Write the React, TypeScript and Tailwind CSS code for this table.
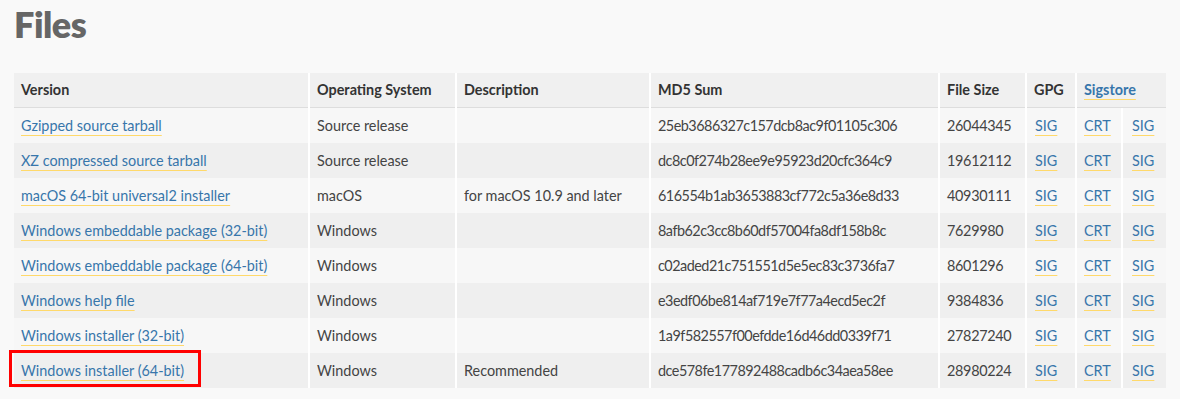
import React from "react";

type Row = {
  v: string;
  os: string;
  d: string;
  md5: string;
  size: string;
};

const rows: Row[] = [
  { v: "Gzipped source tarball", os: "Source release", d: "", md5: "25eb3686327c157dcb8ac9f01105c306", size: "26044345" },
  { v: "XZ compressed source tarball", os: "Source release", d: "", md5: "dc8c0f274b28ee9e95923d20cfc364c9", size: "19612112" },
  { v: "macOS 64-bit universal2 installer", os: "macOS", d: "for macOS 10.9 and later", md5: "616554b1ab3653883cf772c5a36e8d33", size: "40930111" },
  { v: "Windows embeddable package (32-bit)", os: "Windows", d: "", md5: "8afb62c3cc8b60df57004fa8df158b8c", size: "7629980" },
  { v: "Windows embeddable package (64-bit)", os: "Windows", d: "", md5: "c02aded21c751551d5e5ec83c3736fa7", size: "8601296" },
  { v: "Windows help file", os: "Windows", d: "", md5: "e3edf06be814af719e7f77a4ecd5ec2f", size: "9384836" },
  { v: "Windows installer (32-bit)", os: "Windows", d: "", md5: "1a9f582557f00efdde16d46dd0339f71", size: "27827240" },
  { v: "Windows installer (64-bit)", os: "Windows", d: "Recommended", md5: "dce578fe177892488cadb6c34aea58ee", size: "28980224" },
];

function A({ children }: { children: React.ReactNode }) {
  return (
    <a
      href="#"
      className="text-[#3776ab] underline decoration-[#ffd96a] decoration-1 underline-offset-[4px]"
    >
      {children}
    </a>
  );
}

export default function App() {
  const font = { fontFamily: "Lato, 'Noto Sans', sans-serif" };
  return (
    <div className="min-h-[399px] w-[1180px] bg-[#f9f9f9] px-[14px] pt-[4px]" style={font}>
      <h2 className="m-0 text-[36px] font-extrabold leading-[40px] tracking-[-0.5px] text-[#666]">Files</h2>
      <div className="mt-[29px] grid w-[1152px] grid-cols-[294px_145px_192px_287px_85px_48px_44px_43px] gap-x-[2px] bg-white text-[14.4px] text-[#444]">
        {["Version", "Operating System", "Description", "MD5 Sum", "File Size", "GPG"].map((h) => (
          <div
            key={h}
            className="flex h-[35px] items-center border-b border-[#ddd] bg-[#f0f0f0] pl-[7px] font-bold text-[#333]"
          >
            {h}
          </div>
        ))}
        <div className="col-span-2 flex h-[35px] items-center border-b border-[#ddd] bg-[#f0f0f0] pl-[7px] font-bold">
          <A>Sigstore</A>
        </div>
        {rows.map((r, i) => {
          const bg = i % 2 === 0 ? "bg-[#f7f7f7]" : "bg-[#efefef]";
          const cell = `flex h-[35px] items-center pl-[7px] ${bg}`;
          return (
            <React.Fragment key={r.v}>
              <div className={`${cell} relative`}>
                <A>{r.v}</A>
                {i === rows.length - 1 && (
                  <div className="pointer-events-none absolute left-[-5px] top-[-3px] h-[37px] w-[192px] border-[3px] border-[#f00]" />
                )}
              </div>
              <div className={cell}>{r.os}</div>
              <div className={cell}>{r.d}</div>
              <div className={`${cell} tracking-[-0.5px]`}>{r.md5}</div>
              <div className={`${cell} tracking-[-0.3px]`}>{r.size}</div>
              <div className={`${cell} pl-[8px]`}>
                <A>SIG</A>
              </div>
              <div className={cell}>
                <A>CRT</A>
              </div>
              <div className={`${cell} pl-[9px]`}>
                <A>SIG</A>
              </div>
            </React.Fragment>
          );
        })}
      </div>
    </div>
  );
}
